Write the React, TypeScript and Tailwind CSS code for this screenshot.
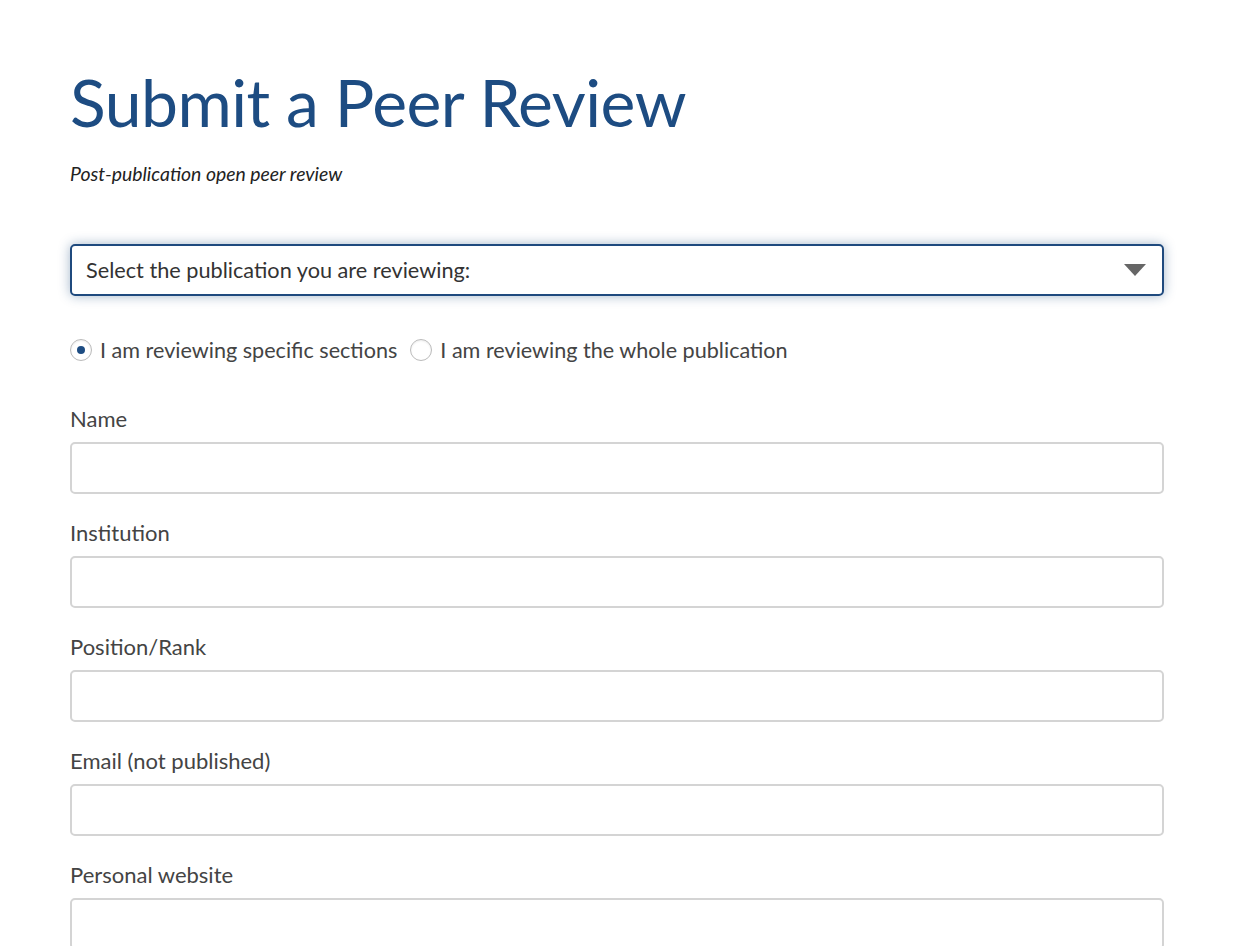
import React from 'react';

const fields = ['Name', 'Institution', 'Position/Rank', 'Email (not published)', 'Personal website'];

export default function App() {
    return (
        <div className="min-h-screen bg-white px-[70px] pt-[62px] font-['Lato','Liberation_Sans',sans-serif] text-[#3f3f3f]">
            <h1 className="text-[66px] leading-[80px] font-normal text-[#1d4c82] tracking-[-0.5px]">Submit a Peer Review</h1>
            <p className="mt-[19px] text-[19.4px] italic leading-[26px] text-[#222]">Post-publication open peer review</p>

            {/* Publication select */}
            <div className="mt-[57px] w-[1094px] h-[52px] rounded-[5px] border-2 border-[#1f4a7e] shadow-[0_0_12px_rgba(31,74,126,0.4)] flex items-center justify-between pl-[14px] pr-[16px]">
                <span className="text-[21.7px] leading-[26px] text-[#333]">Select the publication you are reviewing:</span>
                <svg width="22" height="12" viewBox="0 0 22 12">
                    <path d="M0 0 L22 0 L11 12 Z" fill="#666" />
                </svg>
            </div>

            {/* Review scope */}
            <div className="mt-[41px] flex items-center text-[21.6px] leading-[26px] text-[#444]">
                <label className="flex items-center gap-[8px]">
                    <span className="w-[22px] h-[22px] rounded-full border border-[#bbb] bg-white flex items-center justify-center shadow-[inset_0_1px_2px_rgba(0,0,0,0.08)]">
                        <span className="w-[8px] h-[8px] rounded-full bg-[#1d4c82]" />
                    </span>
                    I am reviewing specific sections
                </label>
                <label className="ml-[13px] flex items-center gap-[8px]">
                    <span className="w-[22px] h-[22px] rounded-full border border-[#bbb] bg-white shadow-[inset_0_1px_2px_rgba(0,0,0,0.08)]" />
                    I am reviewing the whole publication
                </label>
            </div>

            <div className="mt-[43px] flex flex-col gap-[26.5px]">
                {fields.map((f) => (
                    <div key={f} className="flex flex-col">
                        <label className="text-[22px] leading-[26px] text-[#444]">{f}</label>
                        <input className="mt-[9.5px] w-[1094px] h-[52px] rounded-[5px] border-2 border-[#d4d4d4] bg-white outline-none" />
                    </div>
                ))}
            </div>
        </div>
    );
}
